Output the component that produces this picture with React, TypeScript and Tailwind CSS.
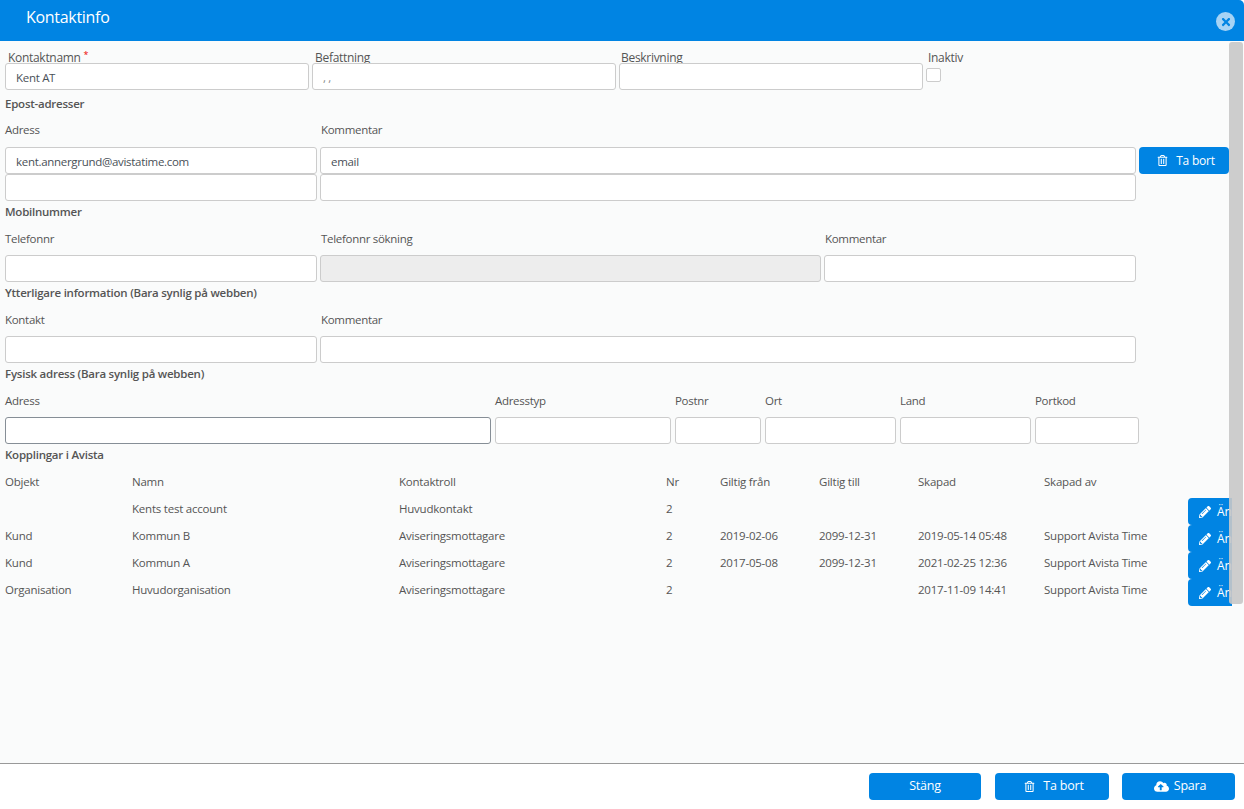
import { FaPencilAlt, FaRegTrashAlt, FaCloudUploadAlt, FaTimes } from 'react-icons/fa'

const rows = [
  { obj: '', name: 'Kents test account', role: 'Huvudkontakt', nr: '2', from: '', to: '', created: '', by: '' },
  { obj: 'Kund', name: 'Kommun B', role: 'Aviseringsmottagare', nr: '2', from: '2019-02-06', to: '2099-12-31', created: '2019-05-14 05:48', by: 'Support Avista Time' },
  { obj: 'Kund', name: 'Kommun A', role: 'Aviseringsmottagare', nr: '2', from: '2017-05-08', to: '2099-12-31', created: '2021-02-25 12:36', by: 'Support Avista Time' },
  { obj: 'Organisation', name: 'Huvudorganisation', role: 'Aviseringsmottagare', nr: '2', from: '', to: '', created: '2017-11-09 14:41', by: 'Support Avista Time' },
]

const gridCols = 'grid grid-cols-[126px_267px_267px_54px_99px_99px_126px_145px_44px]'

function Field({ className, value, placeholder }: { className: string; value?: string; placeholder?: string }) {
  return (
    <input
      readOnly
      defaultValue={value}
      placeholder={placeholder}
      className={`relative block h-[27px] rounded-[3px] border border-[#ccc] bg-white px-[10px] pt-[1px] text-[11.5px] text-[#495057] placeholder:text-[#888] outline-none ${className}`}
    />
  )
}

function Heading({ children, top = false }: { children: string; top?: boolean }) {
  return (
    <div className={`h-[20px] pl-[5px] text-[11.5px] font-semibold leading-[20px] tracking-[-0.24px] text-[#555] ${top ? 'pt-[4px]' : 'pt-[1px]'}`}>
      {children}
    </div>
  )
}

function Label({ className, children }: { className: string; children: string }) {
  return <div className={`shrink-0 ${className}`}>{children}</div>
}

function LabelRow({ children, top = false }: { children: React.ReactNode; top?: boolean }) {
  return (
    <div className={`flex pl-[5px] text-[11.5px] text-[#555] ${top ? 'h-[37px] pt-[11px]' : 'h-[34px] pt-[9px]'}`}>
      {children}
    </div>
  )
}

function PrimaryButton({ className, children }: { className: string; children: React.ReactNode }) {
  return (
    <button className={`flex h-[27px] items-center justify-center gap-[8px] rounded-[4px] bg-[#0084e3] text-[12px] tracking-[-0.2px] text-white ${className}`}>
      {children}
    </button>
  )
}

export default function App() {
  return (
    <div className="flex h-[809px] flex-col overflow-hidden bg-white font-['Open_Sans','Noto_Sans',sans-serif] tracking-[-0.3px]">
      <header className="flex h-[41px] shrink-0 items-start justify-between rounded-tr-[5px] bg-[#0084e3] pl-[26px] pr-[9px]">
        <h1 className="pt-[7px] text-[16px] leading-[20px] text-white">Kontaktinfo</h1>
        <div className="mt-[12px] flex h-[19px] w-[19px] items-center justify-center rounded-full bg-[#a6d3f5] text-[#0084e3]">
          <FaTimes className="h-[12px] w-[12px]" />
        </div>
      </header>

      <main className="relative min-h-0 flex-1 overflow-hidden bg-[#fafbfb]">
        {/* top row, labels run right up under the inputs */}
        <div className="flex gap-[3px] pl-[5px] pt-[9px]">
          <div className="w-[304px]">
            <div className="h-[13px] pl-[3px] text-[12px] leading-[15px] text-[#555]">
              Kontaktnamn <span className="align-top text-[9px] leading-[10px] text-[#e00]">*</span>
            </div>
            <Field className="w-[304px]" value="Kent AT" />
          </div>
          <div className="w-[304px]">
            <div className="h-[13px] pl-[3px] text-[12px] leading-[15px] text-[#555]">Befattning</div>
            <Field className="w-[304px]" placeholder=", ," />
          </div>
          <div className="w-[304px]">
            <div className="h-[13px] pl-[2px] text-[12px] leading-[15px] text-[#555]">Beskrivning</div>
            <Field className="w-[304px]" />
          </div>
          <div>
            <div className="h-[18px] pl-[2px] text-[12px] leading-[15px] text-[#555]">Inaktiv</div>
            <div className="h-[14px] w-[15px] rounded-[2px] border border-[#ccc] bg-white" />
          </div>
        </div>

        <Heading top>Epost-adresser</Heading>
        <LabelRow top>
          <Label className="w-[315px]">Adress</Label>
          <Label className="w-[300px] pl-[1px]">Kommentar</Label>
        </LabelRow>
        <div className="flex gap-[3px] pl-[5px]">
          <Field className="w-[312px]" value="kent.annergrund@avistatime.com" />
          <Field className="w-[816px]" value="email" />
          <PrimaryButton className="w-[90px] pl-[4px]">
            <FaRegTrashAlt className="h-[11px] w-[11px]" /> Ta bort
          </PrimaryButton>
        </div>
        <div className="flex gap-[3px] pl-[5px]">
          <Field className="w-[312px]" />
          <Field className="w-[816px]" />
        </div>

        <Heading>Mobilnummer</Heading>
        <LabelRow>
          <Label className="w-[315px]">Telefonnr</Label>
          <Label className="w-[504px] pl-[1px]">Telefonnr sökning</Label>
          <Label className="w-[200px] pl-[1px]">Kommentar</Label>
        </LabelRow>
        <div className="flex gap-[3px] pl-[5px]">
          <Field className="w-[312px]" />
          <Field className="w-[501px] !bg-[#ededed]" />
          <Field className="w-[312px]" />
        </div>

        <Heading>Ytterligare information (Bara synlig på webben)</Heading>
        <LabelRow>
          <Label className="w-[315px]">Kontakt</Label>
          <Label className="w-[300px] pl-[1px]">Kommentar</Label>
        </LabelRow>
        <div className="flex gap-[3px] pl-[5px]">
          <Field className="w-[312px]" />
          <Field className="w-[816px]" />
        </div>

        <Heading>Fysisk adress (Bara synlig på webben)</Heading>
        <LabelRow>
          <Label className="w-[490px]">Adress</Label>
          <Label className="w-[180px]">Adresstyp</Label>
          <Label className="w-[90px]">Postnr</Label>
          <Label className="w-[135px]">Ort</Label>
          <Label className="w-[135px]">Land</Label>
          <Label className="w-[100px]">Portkod</Label>
        </LabelRow>
        <div className="flex gap-[4px] pl-[5px]">
          <Field className="w-[486px] !border-[#868e96]" />
          <Field className="w-[176px]" />
          <Field className="w-[86px]" />
          <Field className="w-[131px]" />
          <Field className="w-[131px]" />
          <Field className="w-[104px]" />
        </div>

        <Heading>Kopplingar i Avista</Heading>
        <div className="pl-[5px] pt-[4px] text-[11.5px] tracking-[-0.22px] text-[#555]">
          <div className={`${gridCols} h-[27px] items-center`}>
            <div>Objekt</div>
            <div className="pl-[1px]">Namn</div>
            <div className="pl-[1px]">Kontaktroll</div>
            <div className="pl-[1px]">Nr</div>
            <div className="pl-[1px]">Giltig från</div>
            <div className="pl-[1px]">Giltig till</div>
            <div className="pl-[1px]">Skapad</div>
            <div className="pl-[1px]">Skapad av</div>
            <div />
          </div>
          {rows.map((row) => (
            <div key={row.name} className={`${gridCols} h-[27px] items-center`}>
              <div>{row.obj}</div>
              <div className="pl-[1px]">{row.name}</div>
              <div className="pl-[1px]">{row.role}</div>
              <div className="pl-[1px]">{row.nr}</div>
              <div className="pl-[1px]">{row.from}</div>
              <div className="pl-[1px]">{row.to}</div>
              <div className="pl-[1px]">{row.created}</div>
              <div className="pl-[1px]">{row.by}</div>
              <div className="translate-y-[3px] overflow-hidden">
                <PrimaryButton className="w-[90px] !justify-start !gap-[6px] pl-[11px]">
                  <FaPencilAlt className="h-[12px] w-[12px]" /> Ändra
                </PrimaryButton>
              </div>
            </div>
          ))}
        </div>

        {/* overlay scrollbar */}
        <div className="absolute right-[1px] top-[1px] h-[562px] w-[14px] rounded-[3px] bg-[#c8c8c8]/90" />
      </main>

      <footer className="flex h-[46px] shrink-0 items-start justify-end gap-[13px] border-t border-[#999] bg-white pr-[9px] pt-[9px]">
        <PrimaryButton className="mr-[1px] w-[112px] !text-[12.5px]">Stäng</PrimaryButton>
        <PrimaryButton className="w-[114px] pl-[4px] !text-[12.5px]">
          <FaRegTrashAlt className="h-[11px] w-[11px]" /> Ta bort
        </PrimaryButton>
        <PrimaryButton className="w-[113px] !gap-[5px] pl-[3px] !text-[12.5px]">
          <FaCloudUploadAlt className="h-[15px] w-[15px]" /> Spara
        </PrimaryButton>
      </footer>
    </div>
  )
}
